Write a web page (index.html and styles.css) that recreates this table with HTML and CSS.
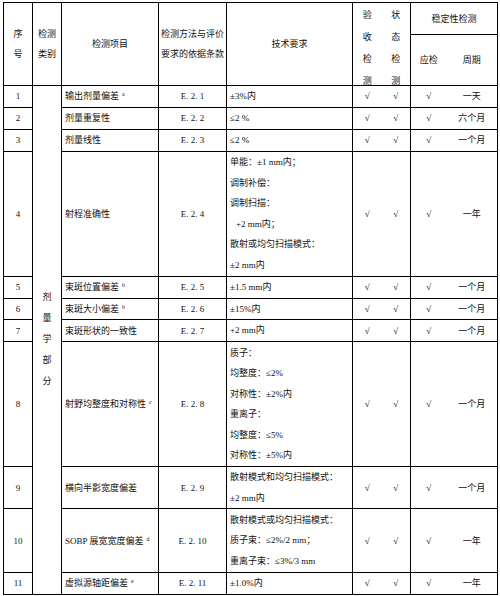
FILE: index.html
```html
<!DOCTYPE html>
<html lang="zh">
<head>
<meta charset="utf-8">
<link rel="stylesheet" href="styles.css">
</head>
<body>
<table class="qa">
  <colgroup>
    <col class="c-no"><col class="c-cat"><col class="c-item"><col class="c-ref"><col class="c-req">
    <col class="c-chk"><col class="c-chk"><col class="c-should"><col class="c-period">
  </colgroup>
  <thead>
    <tr class="h1">
      <th rowspan="2" class="hd2">序<br>号</th>
      <th rowspan="2" class="hd2">检测<br>类别</th>
      <th rowspan="2">检测项目</th>
      <th rowspan="2" class="hd2">检测方法与评价<br>要求的依据条款</th>
      <th rowspan="2" class="req-h">技术要求</th>
      <th rowspan="2" class="vt nr"><div class="vt-in">验<br>收<br>检<br>测</div></th>
      <th rowspan="2" class="vt"><div class="vt-in">状<br>态<br>检<br>测</div></th>
      <th colspan="2">稳定性检测</th>
    </tr>
    <tr class="h2">
      <th class="nr">应检</th>
      <th>周期</th>
    </tr>
  </thead>
  <tbody>
    <tr class="r21">
      <td class="no">1</td>
      <td rowspan="11" class="cat"><div class="cat-in">剂<br>量<br>学<br>部<br>分</div></td>
      <td class="item">输出剂量偏差<sup>a</sup></td>
      <td class="ref">E. 2. 1</td>
      <td class="req">±3%内</td>
      <td class="chk nr">√</td><td class="chk">√</td><td class="chk nr">√</td><td class="per">一天</td>
    </tr>
    <tr class="r22">
      <td class="no">2</td>
      <td class="item">剂量重复性</td>
      <td class="ref">E. 2. 2</td>
      <td class="req">≤2 %</td>
      <td class="chk nr">√</td><td class="chk">√</td><td class="chk nr">√</td><td class="per">六个月</td>
    </tr>
    <tr class="r22">
      <td class="no">3</td>
      <td class="item">剂量线性</td>
      <td class="ref">E. 2. 3</td>
      <td class="req">≤2 %</td>
      <td class="chk nr">√</td><td class="chk">√</td><td class="chk nr">√</td><td class="per">一个月</td>
    </tr>
    <tr class="r125">
      <td class="no">4</td>
      <td class="item">射程准确性</td>
      <td class="ref">E. 2. 4</td>
      <td class="req">单能：±1 mm内；<br>调制补偿：<br>调制扫描：<br><span class="ind">+2 mm内；</span><br>散射或均匀扫描模式：<br>±2 mm内</td>
      <td class="chk nr">√</td><td class="chk">√</td><td class="chk nr">√</td><td class="per">一年</td>
    </tr>
    <tr class="r22">
      <td class="no">5</td>
      <td class="item">束斑位置偏差<sup>b</sup></td>
      <td class="ref">E. 2. 5</td>
      <td class="req">±1.5 mm内</td>
      <td class="chk nr">√</td><td class="chk">√</td><td class="chk nr">√</td><td class="per">一个月</td>
    </tr>
    <tr class="r21">
      <td class="no">6</td>
      <td class="item">束斑大小偏差<sup>b</sup></td>
      <td class="ref">E. 2. 6</td>
      <td class="req">±15%内</td>
      <td class="chk nr">√</td><td class="chk">√</td><td class="chk nr">√</td><td class="per">一个月</td>
    </tr>
    <tr class="r22">
      <td class="no">7</td>
      <td class="item">束斑形状的一致性</td>
      <td class="ref">E. 2. 7</td>
      <td class="req">+2 mm内</td>
      <td class="chk nr">√</td><td class="chk">√</td><td class="chk nr">√</td><td class="per">一个月</td>
    </tr>
    <tr class="r125">
      <td class="no">8</td>
      <td class="item">射野均整度和对称性<sup>c</sup></td>
      <td class="ref">E. 2. 8</td>
      <td class="req">质子：<br>均整度：≤2%<br>对称性：±2%内<br>重离子：<br>均整度：≤5%<br>对称性：±5%内</td>
      <td class="chk nr">√</td><td class="chk">√</td><td class="chk nr">√</td><td class="per">一个月</td>
    </tr>
    <tr class="r42">
      <td class="no">9</td>
      <td class="item">横向半影宽度偏差</td>
      <td class="ref">E. 2. 9</td>
      <td class="req">散射模式和均匀扫描模式：<br>±2 mm内</td>
      <td class="chk nr">√</td><td class="chk">√</td><td class="chk nr">√</td><td class="per">一个月</td>
    </tr>
    <tr class="r64">
      <td class="no">10</td>
      <td class="item">SOBP 展宽宽度偏差<sup>d</sup></td>
      <td class="ref">E. 2. 10</td>
      <td class="req">散射模式或均匀扫描模式：<br>质子束：≤2%/2 mm；<br>重离子束：≤3%/3 mm</td>
      <td class="chk nr">√</td><td class="chk">√</td><td class="chk nr">√</td><td class="per">一年</td>
    </tr>
    <tr class="r20">
      <td class="no">11</td>
      <td class="item">虚拟源轴距偏差<sup>e</sup></td>
      <td class="ref">E. 2. 11</td>
      <td class="req">±1.0%内</td>
      <td class="chk nr">√</td><td class="chk">√</td><td class="chk nr">√</td><td class="per">一年</td>
    </tr>
  </tbody>
</table>
</body>
</html>
```

FILE: styles.css
```css
html, body {
  margin: 0;
  background: #fff;
}
body {
  padding: 2px 3px 0 3px;
  font-family: "Liberation Serif", "Noto Sans CJK SC", serif;
  font-size: 9px;
  color: #111;
}
.qa {
  border-collapse: collapse;
  table-layout: fixed;
  width: 495px;
}
.c-no { width: 29px; }
.c-cat { width: 29px; }
.c-item { width: 97px; }
.c-ref { width: 68px; }
.c-req { width: 126px; }
.c-chk { width: 29px; }
.c-should { width: 36px; }
.c-period { width: 51px; }

.qa th, .qa td {
  border: 1px solid #000;
  padding: 0;
  vertical-align: middle;
  font-weight: normal;
  line-height: 20px;
  overflow: visible;
}
.qa th {
  text-align: center;
}
.qa .nr { border-right: none; }
.qa .nr + th, .qa .nr + td { border-left: none; }

.h1 { height: 32px; }
.h2 { height: 51px; }
.hd2 { line-height: 23px; }
.req-h { padding-right: 10px; }
.qa th.vt { vertical-align: top; }
.vt-in {
  height: 78px;
  padding-top: 1px;
  line-height: 22px;
}

.r20 { height: 20px; }
.r21 { height: 21px; }
.r22 { height: 22px; }
.r42 { height: 42px; }
.r64 { height: 64px; }
.r125 { height: 125px; }

.no { text-align: center; }
.cat { text-align: center; }
.cat-in { line-height: 21px; }
.item { padding-left: 3px !important; text-align: left; }
.ref { text-align: center; }
.qa .req { padding-left: 3px; text-align: left; line-height: 20.5px; }
.ind { padding-left: 6px; }
.chk { text-align: center; }
.per { text-align: center; }

sup {
  font-size: 6px;
  line-height: 0;
  vertical-align: 3px;
  margin-left: 3px;
}
```
